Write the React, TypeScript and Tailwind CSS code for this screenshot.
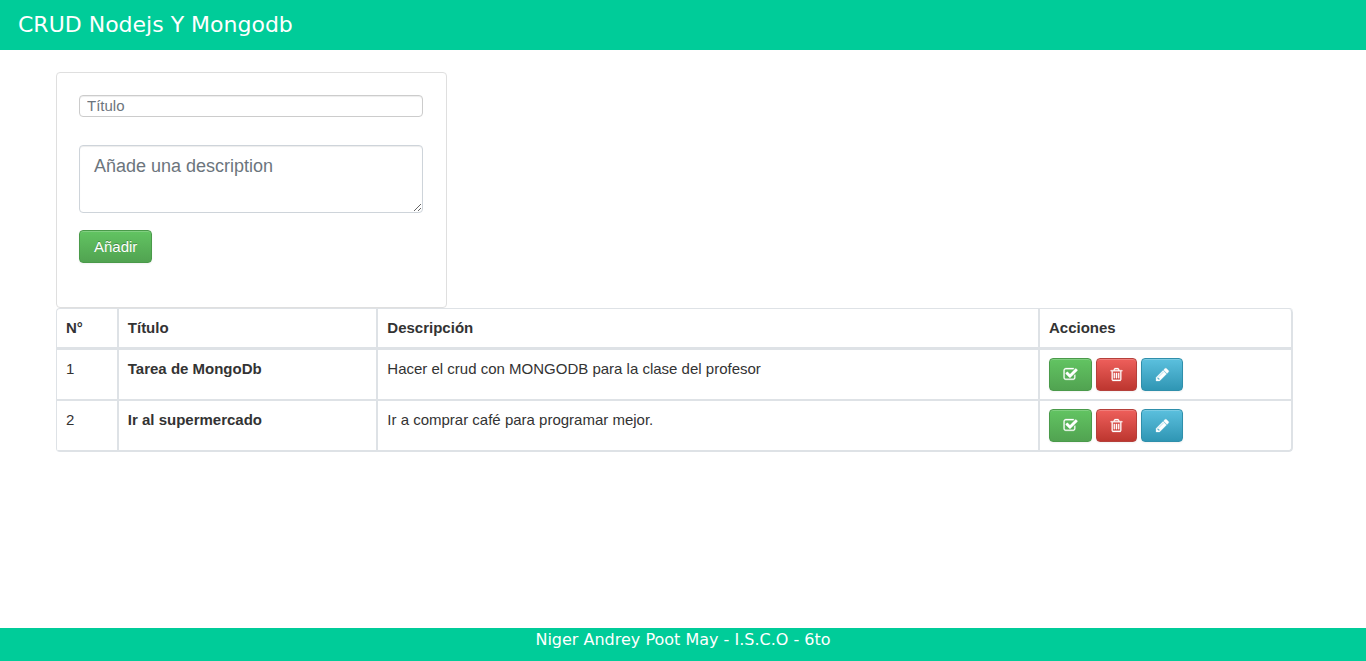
import React from "react";

const icons = {
  check:
    "M1472 930v318q0 119-84.5 203.5t-203.5 84.5h-832q-119 0-203.5-84.5t-84.5-203.5v-832q0-119 84.5-203.5t203.5-84.5h832q63 0 117 25 15 7 18 23 3 17-9 29l-49 49q-10 10-23 10-3 0-9-2-23-6-45-6h-832q-66 0-113 47t-47 113v832q0 66 47 113t113 47h832q66 0 113-47t47-113v-254q0-13 9-22l64-64q10-10 23-10 6 0 12 3 20 8 20 29zm231-489l-814 814q-24 24-57 24t-57-24l-430-430q-24-24-24-57t24-57l110-110q24-24 57-24t57 24l263 263 647-647q24-24 57-24t57 24l110 110q24 24 24 57t-24 57z",
  trash:
    "M704 736v576q0 14-9 23t-23 9h-64q-14 0-23-9t-9-23v-576q0-14 9-23t23-9h64q14 0 23 9t9 23zm256 0v576q0 14-9 23t-23 9h-64q-14 0-23-9t-9-23v-576q0-14 9-23t23-9h64q14 0 23 9t9 23zm256 0v576q0 14-9 23t-23 9h-64q-14 0-23-9t-9-23v-576q0-14 9-23t23-9h64q14 0 23 9t9 23zm128 724v-948h-896v948q0 22 7 40.5t14.5 27 10.5 8.5h832q3 0 10.5-8.5t14.5-27 7-40.5zm-672-1076h448l-48-117q-7-9-17-11h-317q-10 2-17 11zm928 32v64q0 14-9 23t-23 9h-96v948q0 83-47 143.5t-113 60.5h-832q-66 0-113-58.5t-47-141.5v-952h-96q-14 0-23-9t-9-23v-64q0-14 9-23t23-9h309l70-167q15-37 54-63t79-26h320q40 0 79 26t54 63l70 167h309q14 0 23 9t9 23z",
  pencil:
    "M491 1536l91-91-235-235-91 91v107h128v128h107zm523-928q0-22-22-22-10 0-17 7l-542 542q-7 7-7 17 0 22 22 22 10 0 17-7l542-542q7-7 7-17zm-54-192l416 416-832 832h-416v-416zm683 96q0 53-37 90l-166 166-416-416 166-165q36-38 90-38 53 0 91 38l235 234q37 39 37 91z",
};

const tasks = [
  {
    title: "Tarea de MongoDb",
    description: "Hacer el crud con MONGODB para la clase del profesor",
  },
  {
    title: "Ir al supermercado",
    description: "Ir a comprar café para programar mejor.",
  },
];

const button =
  "flex h-[33px] items-center justify-center rounded border bg-linear-to-b text-white inset-shadow-[0_1px_0_rgba(255,255,255,0.2)] shadow-[0_1px_2px_rgba(0,0,0,0.05)]";
const green = "from-[#62c462] to-[#51a351] border-[#4a9a4a]";
const red = "from-[#ee5f5b] to-[#bd362f] border-[#b5403b]";
const blue = "from-[#5bc0de] to-[#2f96b4] border-[#2f8fab]";

const cell = "border-r-2 border-[#dee2e6] px-[9px] py-2 text-left align-top";

function Icon({ path }: { path: string }) {
  return (
    <svg
      viewBox="0 0 1792 1792"
      className="size-[15px]"
      fill="currentColor"
      stroke="currentColor"
      strokeWidth="36"
      aria-hidden="true"
    >
      <path d={path} />
    </svg>
  );
}

export default function App() {
  return (
    <div className="flex min-h-screen flex-col bg-white font-['Liberation_Sans',Arial,sans-serif] text-[15px] leading-[22px] text-[#333]">
      <header className="flex h-[50px] items-center bg-[#00cc99] px-[18px] font-['Verdana','DejaVu_Sans',sans-serif] text-[22px] text-white">
        <h1>CRUD Nodejs Y Mongodb</h1>
      </header>

      <main className="flex-1 pt-[22px] pr-[73px] pl-14">
        <form
          className="flex w-[391px] max-w-full flex-col rounded border border-[#dfdfdf] pt-[22px] pr-[23px] pb-11 pl-[22px]"
          onSubmit={(e) => e.preventDefault()}
        >
          <input
            type="text"
            aria-label="Título"
            placeholder="Título"
            className="h-[22px] w-full rounded border border-[#ccc] px-[7px] inset-shadow-[0_1px_1px_rgba(0,0,0,0.075)] placeholder:text-[#6c757d]"
          />
          <textarea
            aria-label="Descripción"
            placeholder="Añade una description"
            className="mt-7 h-[68px] w-full resize rounded border border-[#ced4da] px-[14px] py-2 text-lg leading-6 inset-shadow-[0_1px_1px_rgba(0,0,0,0.075)] placeholder:text-[#6c757d]"
          />
          <button
            type="submit"
            className={`${button} ${green} mt-[17px] self-start px-[14px] text-shadow-[0_-1px_0_rgba(0,0,0,0.25)]`}
          >
            Añadir
          </button>
        </form>

        <div className="overflow-hidden rounded border-t border-l border-[#dee2e6]">
          <table className="w-full table-fixed border-separate border-spacing-0">
            <thead>
              <tr>
                <th className={`${cell} w-[5%] border-b-3`}>N°</th>
                <th className={`${cell} w-[21%] border-b-3`}>Título</th>
                <th className={`${cell} border-b-3`}>Descripción</th>
                <th className={`${cell} w-[253px] rounded-tr border-b-3`}>Acciones</th>
              </tr>
            </thead>
            <tbody>
              {tasks.map((task, i) => (
                <tr key={task.title} className="last:[&>td:last-child]:rounded-br">
                  <td className={`${cell} border-b-2`}>{i + 1}</td>
                  <td className={`${cell} border-b-2 font-bold`}>{task.title}</td>
                  <td className={`${cell} border-b-2`}>{task.description}</td>
                  <td className={`${cell} border-b-2`}>
                    <div className="flex gap-1">
                      <button type="button" aria-label="Completar" className={`${button} ${green} w-[43px]`}>
                        <Icon path={icons.check} />
                      </button>
                      <button type="button" aria-label="Eliminar" className={`${button} ${red} w-[41px]`}>
                        <Icon path={icons.trash} />
                      </button>
                      <button type="button" aria-label="Editar" className={`${button} ${blue} w-[42px]`}>
                        <Icon path={icons.pencil} />
                      </button>
                    </div>
                  </td>
                </tr>
              ))}
            </tbody>
          </table>
        </div>
      </main>

      <footer className="h-[33px] bg-[#00cc99] pt-px text-center font-['Verdana','DejaVu_Sans',sans-serif] text-base leading-[22px] text-white">
        Niger Andrey Poot May - I.S.C.O - 6to
      </footer>
    </div>
  );
}
